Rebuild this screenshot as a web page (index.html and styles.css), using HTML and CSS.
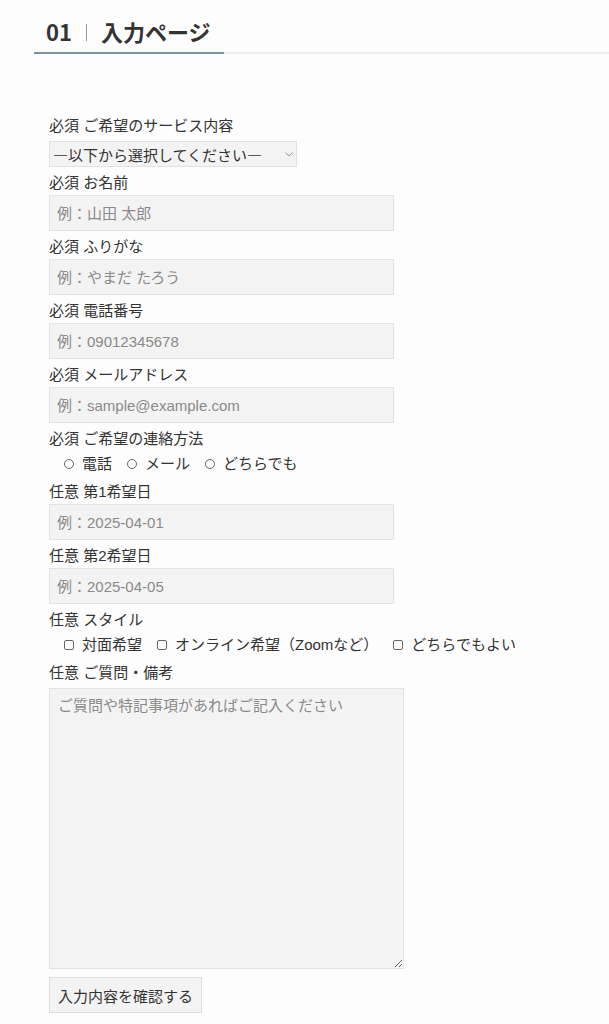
FILE: index.html
```html
<!DOCTYPE html>
<html lang="ja">
<head>
<meta charset="utf-8">
<title>01 入力ページ</title>
<link rel="stylesheet" href="styles.css">
</head>
<body>
<div class="page">
  <h1 class="title">01<span class="sep"></span>入力ページ</h1>
  <form class="form">
    <div class="label">必須 ご希望のサービス内容</div>
    <div class="select-wrap">
      <select class="select">
        <option>—以下から選択してください—</option>
      </select>
      <svg class="chev" width="8" height="5" viewBox="0 0 8 5"><path d="M0.5 0.5 L4 4 L7.5 0.5" fill="none" stroke="#9a9a9a" stroke-width="1"/></svg>
    </div>

    <div class="label">必須 お名前</div>
    <input class="input" type="text" placeholder="例：山田 太郎">

    <div class="label">必須 ふりがな</div>
    <input class="input" type="text" placeholder="例：やまだ たろう">

    <div class="label">必須 電話番号</div>
    <input class="input" type="text" placeholder="例：09012345678">

    <div class="label">必須 メールアドレス</div>
    <input class="input" type="text" placeholder="例：sample@example.com">

    <div class="label">必須 ご希望の連絡方法</div>
    <div class="choices">
      <label class="choice"><input class="radio" type="radio" name="contact">電話</label>
      <label class="choice"><input class="radio" type="radio" name="contact">メール</label>
      <label class="choice"><input class="radio" type="radio" name="contact">どちらでも</label>
    </div>

    <div class="label">任意 第1希望日</div>
    <input class="input" type="text" placeholder="例：2025-04-01">

    <div class="label">任意 第2希望日</div>
    <input class="input" type="text" placeholder="例：2025-04-05">

    <div class="label">任意 スタイル</div>
    <div class="choices">
      <label class="choice"><input class="check" type="checkbox">対面希望</label>
      <label class="choice"><input class="check" type="checkbox">オンライン希望（Zoomなど）</label>
      <label class="choice"><input class="check" type="checkbox">どちらでもよい</label>
    </div>

    <div class="label">任意 ご質問・備考</div>
    <textarea class="textarea" placeholder="ご質問や特記事項があればご記入ください"></textarea>

    <button class="button" type="button">入力内容を確認する</button>
  </form>
</div>
</body>
</html>
```

FILE: styles.css
```css
html, body {
  margin: 0;
  padding: 0;
  background: #fdfdfd;
}

body {
  font-family: "Liberation Sans", "Noto Sans CJK JP", sans-serif;
  color: #333;
  font-size: 15px;
}

.page {
  padding-top: 16px;
}

.title {
  position: relative;
  margin: 0 0 0 34px;
  padding: 0 0 6px 12px;
  font-family: "Noto Sans CJK JP", sans-serif;
  font-size: 22px;
  font-weight: 700;
  line-height: 30px;
  color: #333;
  border-bottom: 2px solid #eeeeee;
  display: flex;
  align-items: center;
}

.title::after {
  content: "";
  position: absolute;
  left: 0;
  bottom: -2px;
  width: 190px;
  height: 2px;
  background: #7e929c;
}

.sep {
  display: inline-block;
  width: 1px;
  height: 17px;
  background: #9a9a9a;
  margin: 2px 14px 0 14px;
}

.form {
  padding: 56px 49px 40px 49px;
}

.label {
  margin-top: 5px;
  margin-bottom: 1px;
  line-height: 22px;
  font-size: 15px;
  color: #333;
  font-family: "Liberation Sans", "Noto Sans CJK JP", sans-serif;
}

.select-wrap {
  position: relative;
  width: 248px;
  margin-top: 4px;
  margin-bottom: 5px;
}

.select {
  display: block;
  width: 248px;
  height: 26px;
  box-sizing: border-box;
  -webkit-appearance: none;
  appearance: none;
  background: #f3f3f3;
  border: 1px solid #e2e2e2;
  border-radius: 0;
  padding: 0 0 0 3px;
  font-family: "Noto Sans CJK JP", sans-serif;
  font-size: 15px;
  color: #333;
  margin: 0;
  outline: none;
}

.chev {
  position: absolute;
  right: 4px;
  top: 11px;
  pointer-events: none;
}

.input {
  display: block;
  width: 345px;
  height: 36px;
  box-sizing: border-box;
  margin: 0;
  padding: 0 7px;
  background: #f3f3f3;
  border: 1px solid #e3e3e3;
  border-radius: 0;
  font-family: "Liberation Sans", "Noto Sans CJK JP", sans-serif;
  font-size: 15px;
  color: #333;
  outline: none;
}

.input::placeholder,
.textarea::placeholder {
  color: #8a8a8a;
}

.choices {
  display: flex;
  align-items: center;
  height: 25px;
  padding-left: 15px;
}

.choice {
  display: flex;
  align-items: center;
  margin-right: 15px;
  line-height: 22px;
  font-size: 15px;
  color: #333;
  white-space: nowrap;
}

.radio,
.check {
  -webkit-appearance: none;
  appearance: none;
  width: 10px;
  height: 10px;
  box-sizing: border-box;
  margin: 1px 8px 0 0;
  border: 1px solid #666;
  background: #fff;
  flex: none;
}

.radio {
  border-radius: 50%;
}

.check {
  border-radius: 2px;
}

.textarea {
  display: block;
  width: 355px;
  height: 281px;
  box-sizing: border-box;
  margin: 4px 0 0 0;
  padding: 6px 8px;
  background: #f3f3f3;
  border: 1px solid #e3e3e3;
  border-radius: 0;
  font-family: "Liberation Sans", "Noto Sans CJK JP", sans-serif;
  font-size: 15px;
  line-height: 22px;
  color: #333;
  outline: none;
  resize: vertical;
}

.button {
  display: block;
  margin-top: 8px;
  width: 153px;
  height: 36px;
  padding: 0 0 0 8px;
  box-sizing: border-box;
  background: #f3f3f3;
  border: 1px solid #dddddd;
  border-radius: 0;
  font-family: "Noto Sans CJK JP", sans-serif;
  font-size: 15px;
  color: #333;
  text-align: left;
  white-space: nowrap;
}
```
